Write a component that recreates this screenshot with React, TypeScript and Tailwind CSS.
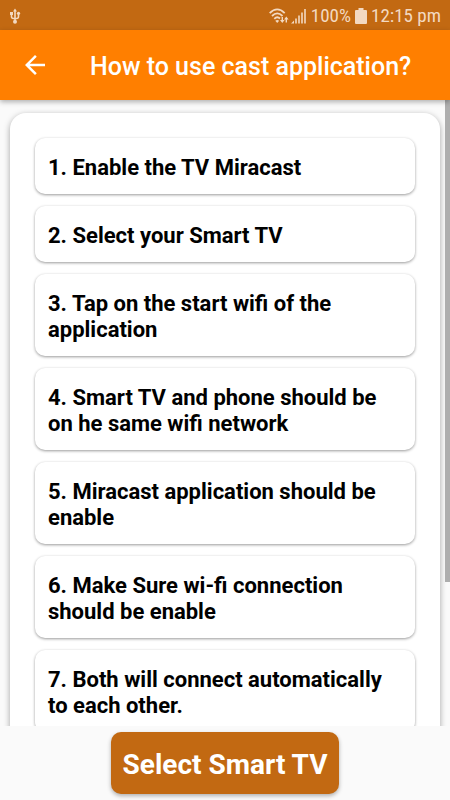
const steps = [
    "1. Enable the TV Miracast",
    "2. Select your Smart TV",
    "3. Tap on the start wifi of the application",
    "4. Smart TV and phone should be on he same wifi network",
    "5. Miracast application should be enable",
    "6. Make Sure wi-fi connection should be enable",
    "7. Both will connect automatically to each other.",
];

function UsbIcon() {
    return (
        <svg viewBox="0 0 12 16" className="w-3 h-4" fill="none" stroke="currentColor" strokeWidth="1.6">
            <path d="M6 2v12M2.500 6v2.500Q2.500 10.500 4.500 10.500h3Q9.500 10.500 9.500 8.500V6" />
            <path d="M6 0.500L8 3.500H4z M1 4h3v3H1z" fill="currentColor" stroke="none" />
            <circle cx="9.500" cy="5.300" r="1.600" fill="currentColor" stroke="none" />
            <circle cx="6" cy="13.700" r="2" fill="currentColor" stroke="none" />
        </svg>
    );
}

function BackIcon() {
    return (
        <svg viewBox="0 0 24 24" className="size-[30px]" fill="currentColor">
            <path d="M20 11H7.830l5.590-5.590L12 4l-8 8 8 8 1.410-1.410L7.830 13H20v-2z" />
        </svg>
    );
}

function WifiIcon() {
    return (
        <svg viewBox="0 0 20 16" className="w-5 h-4" fill="none" stroke="currentColor" strokeWidth="1.8">
            <path d="M0.700 5.200Q8.200 -2.300 15.700 5.200" />
            <path d="M3 8Q8.200 2.800 13.500 8" />
            <path d="M5.300 10.800Q8.200 7.800 11 10.500" />
            <path d="M6.300 12.800Q8.200 11 10.200 12.800L8.200 15z" fill="currentColor" stroke="none" />
            <path d="M13.300 9v4M17.300 10v4.500" strokeWidth="1.400" />
            <path d="M11 12h4.600l-2.300 3z M15 11.500h4.600L17.300 8.500z" fill="currentColor" stroke="none" />
        </svg>
    );
}

function SignalIcon() {
    return (
        <svg viewBox="0 0 16 16" className="w-4 h-4" fill="currentColor">
            <path d="M0 15.500l3-3v3z M4.200 10.500h1.600v5H4.200z M7.200 7.500h1.600v8H7.200z M10.200 4.500h1.600v11h-1.600z M13.200 1h1.600v14.500h-1.600z" />
        </svg>
    );
}

function BatteryIcon() {
    return (
        <svg viewBox="0 0 12 16" className="w-3 h-4" fill="currentColor">
            <path d="M3.500 0h5v2H11q1 0 1 1v12q0 1-1 1H1q-1 0-1-1V3q0-1 1-1h2.500z" />
        </svg>
    );
}

function StatusBar() {
    return (
        <div className="flex h-[30px] shrink-0 items-center justify-between bg-[#c26912] px-[9px] pt-px text-[#f3d9c1]">
            <UsbIcon />
            <div className="flex items-center gap-1 font-['Roboto_Condensed','Roboto',sans-serif] text-[19px] leading-none">
                <div className="flex items-center gap-[2px]">
                    <WifiIcon />
                    <SignalIcon />
                </div>
                <span>100%</span>
                <BatteryIcon />
                <span>12:15 pm</span>
            </div>
        </div>
    );
}

export default function App() {
    return (
        <div className="flex h-screen flex-col bg-[#fafafa] font-['Roboto',sans-serif]">
            <StatusBar />

            {/* App bar */}
            <header className="relative z-10 flex h-[70px] shrink-0 items-center gap-10 bg-[#ff7f00] px-5 text-white shadow-[0_2px_5px_rgba(0,0,0,0.3)]">
                <button aria-label="Back">
                    <BackIcon />
                </button>
                <h1 className="pt-1 text-[25px] leading-8 font-medium">How to use cast application?</h1>
            </header>

            {/* Steps */}
            <div className="relative min-h-0 flex-1">
                <main className="h-full overflow-y-auto px-[10px] pt-[13px] pb-3 [scrollbar-width:none]">
                    <ol className="flex flex-col gap-3 rounded-2xl bg-white p-[25px] shadow-[0_2px_6px_rgba(0,0,0,0.35)]">
                        {steps.map((step) => (
                            <li
                                key={step}
                                className="rounded-[10px] bg-white px-[13px] pt-[17px] pb-[13px] text-[22px] leading-[26px] font-bold text-black shadow-[0_1px_3px_rgba(0,0,0,0.4)]"
                            >
                                {step}
                            </li>
                        ))}
                    </ol>
                </main>
                <div className="absolute top-0 right-0 h-[77%] w-[5px] bg-[#aeaeae]" />
            </div>

            <footer className="flex shrink-0 justify-center bg-[#fafafa] py-[6px]">
                <button className="rounded-[10px] bg-[#c26912] px-3 pt-[17px] pb-[13px] text-[28px] leading-8 font-bold text-white shadow-[0_2px_4px_rgba(0,0,0,0.3)]">
                    Select Smart TV
                </button>
            </footer>
        </div>
    );
}
